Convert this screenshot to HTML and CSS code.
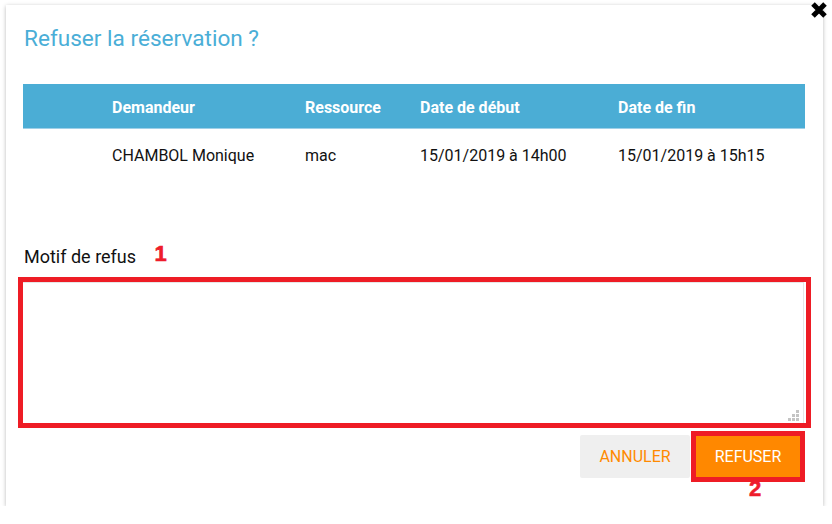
FILE: index.html
```html
<!DOCTYPE html>
<html lang="fr">
<head>
<meta charset="utf-8">
<title>Refuser la réservation</title>
<link rel="stylesheet" href="styles.css">
</head>
<body>
<div class="dialog">
  <button class="close" aria-label="Fermer">
    <svg width="18" height="18" viewBox="0 0 18 18"><path d="M3 3 L15 15 M15 3 L3 15" stroke="#000" stroke-width="5" stroke-linecap="butt"/></svg>
  </button>
  <h2 class="title">Refuser la réservation ?</h2>
  <div class="table">
    <div class="row head">
      <div></div><div>Demandeur</div><div>Ressource</div><div>Date de début</div><div>Date de fin</div>
    </div>
    <div class="row body">
      <div></div><div>CHAMBOL Monique</div><div>mac</div><div>15/01/2019 à 14h00</div><div>15/01/2019 à 15h15</div>
    </div>
  </div>
  <div class="label">Motif de refus <span class="mark">1</span></div>
  <div class="hl-box">
    <textarea class="motif"></textarea>
    <svg class="grip" width="12" height="12" viewBox="0 0 12 12"><g fill="#c4c4c4"><rect x="8" y="0" width="3" height="3"/><rect x="4" y="4" width="3" height="3"/><rect x="8" y="4" width="3" height="3"/><rect x="0" y="8" width="3" height="3"/><rect x="4" y="8" width="3" height="3"/><rect x="8" y="8" width="3" height="3"/></g></svg>
  </div>
  <div class="actions">
    <button class="btn cancel">ANNULER</button>
    <div class="hl-btn">
      <button class="btn confirm">REFUSER</button>
      <span class="mark mark2">2</span>
    </div>
  </div>
</div>
</body>
</html>
```
FILE: styles.css
```css
* { box-sizing: border-box; }
html, body { margin: 0; padding: 0; background: #fff; }
body { font-family: Roboto, "Liberation Sans", sans-serif; color: #111; }

.dialog {
  position: relative;
  margin: 5px 0 0 6px;
  width: 817px;
  height: 501px;
  padding: 0 18px 0 17px;
  background: #fff;
  box-shadow: 0 1px 4px rgba(0,0,0,0.28);
}

.close {
  position: absolute;
  top: -4px;
  right: -5px;
  width: 18px;
  height: 18px;
  padding: 0;
  border: 0;
  background: none;
  display: block;
}
.close svg { display: block; }

.title {
  margin: 0 0 0 1px;
  padding-top: 21px;
  font-size: 22.6px;
  line-height: 26px;
  font-weight: 400;
  color: #4aaed7;
}

.table { margin-top: 32px; }
.row {
  display: grid;
  grid-template-columns: 89px 193px 115px 198px 1fr;
  align-items: center;
  font-size: 16px;
}
.row.head {
  height: 45px;
  padding-top: 2px;
  background: #4badd5;
  border-bottom: 1px solid #9fd0e8;
  color: #fff;
  font-weight: 700;
}
.row.body { height: 50px; padding-top: 2px; color: #111; }

.label {
  margin: 66px 0 0 1px;
  font-size: 18px;
  line-height: 22px;
  color: #111;
}
.mark {
  font-family: "Liberation Sans", Arial, sans-serif;
  font-weight: 700;
  color: #ee1c2b;
  font-size: 22px;
  -webkit-text-stroke: 0.6px #ee1c2b;
}
.label .mark { margin-left: 14px; position: relative; top: -2px; }

.hl-box {
  position: relative;
  margin: 9px -6px 0 -5px;
  height: 151px;
  border: 5px solid #ee1c25;
  padding: 0 2px 0 0;
}
.motif {
  display: block;
  width: 100%;
  height: 100%;
  border: 1px solid #e6e6e6;
  border-left: 0;
  border-bottom: 0;
  resize: none;
  outline: none;
  font-family: inherit;
}
.grip {
  position: absolute;
  right: 6px;
  bottom: 1px;
}

.actions {
  margin-top: 3px;
  display: flex;
  justify-content: flex-end;
  align-items: center;
}
.btn {
  font-family: Roboto, "Liberation Sans", sans-serif;
  font-size: 16px;
  border: 0;
  padding: 0;
  text-align: center;
}
.cancel {
  width: 110px;
  height: 43px;
  margin-right: 1px;
  background: #efefef;
  color: #ff8a00;
  border-radius: 2px;
}
.hl-btn {
  position: relative;
  border: 5px solid #ee1c25;
}
.confirm {
  display: block;
  width: 104px;
  height: 41px;
  background: #ff8800;
  color: #fff;
}
.mark2 {
  position: absolute;
  left: 53px;
  top: 100%;
  margin-top: 1px;
  line-height: 22px;
}
```
